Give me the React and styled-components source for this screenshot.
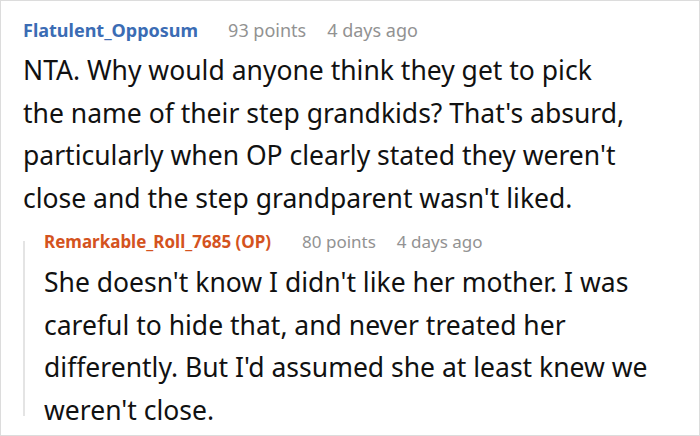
import React from "react";
import styled, { createGlobalStyle } from "styled-components";

const Global = createGlobalStyle`
  html, body { margin: 0; padding: 0; background: #fff; }
  body { font-family: "Noto Sans", "Open Sans", sans-serif; }
`;

const Frame = styled.div`
  box-sizing: border-box;
  width: 700px;
  height: 436px;
  border: 1px solid #dcdcdc;
  padding: 17px 10px 0 22px;
  overflow: hidden;
`;

const Comment = styled.div`
  display: flex;
  flex-direction: column;
`;

const Reply = styled.div`
  position: relative;
  display: flex;
  flex-direction: column;
  margin-top: 11px;
  padding-left: 21px;

  &::before {
    content: "";
    position: absolute;
    left: 0;
    top: 11px;
    bottom: 15px;
    width: 2px;
    background: #e4e4e4;
  }
`;

const Meta = styled.div`
  display: flex;
  align-items: baseline;
  font-size: ${(p) => p.$size}px;
  line-height: 24px;
  margin-bottom: ${(p) => p.$gap}px;
`;

const User = styled.span`
  font-weight: 700;
  color: ${(p) => p.$color};
  margin-right: ${(p) => p.$space}px;
`;

const Stat = styled.span`
  color: #929292;
  margin-right: 21px;
`;

const Body = styled.p`
  margin: 0;
  color: #111;
  font-size: 26.5px;
  line-height: 42.5px;
  white-space: nowrap;
`;

const Line = styled.span`
  display: block;
`;

export default function App() {
  return (
    <>
      <Global />
      <Frame>
        <Comment>
          <Meta $size={18} $gap={7}>
            <User $color="#3b6cb4" $space={30}>Flatulent_Opposum</User>
            <Stat>93 points</Stat>
            <Stat>4 days ago</Stat>
          </Meta>
          <Body>
            <Line>NTA. Why would anyone think they get to pick</Line>
            <Line>the name of their step grandkids? That's absurd,</Line>
            <Line>particularly when OP clearly stated they weren't</Line>
            <Line>close and the step grandparent wasn't liked.</Line>
          </Body>
        </Comment>
        <Reply>
          <Meta $size={17} $gap={7}>
            <User $color="#d4531e" $space={31}>Remarkable_Roll_7685 (OP)</User>
            <Stat>80 points</Stat>
            <Stat>4 days ago</Stat>
          </Meta>
          <Body>
            <Line>She doesn't know I didn't like her mother. I was</Line>
            <Line>careful to hide that, and never treated her</Line>
            <Line>differently. But I'd assumed she at least knew we</Line>
            <Line>weren't close.</Line>
          </Body>
        </Reply>
      </Frame>
    </>
  );
}
